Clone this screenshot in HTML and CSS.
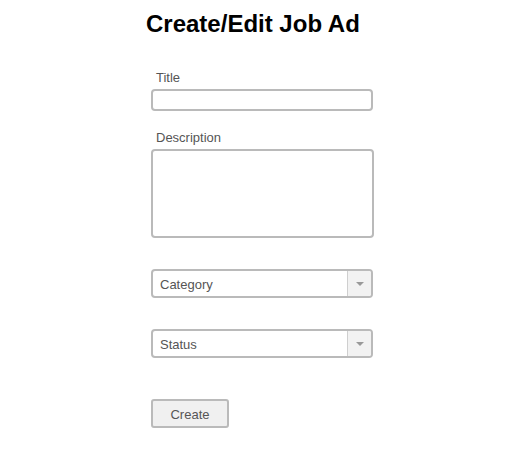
FILE: index.html
```html
<!DOCTYPE html>
<html>
<head>
<meta charset="utf-8">
<link rel="stylesheet" href="styles.css">
</head>
<body>
<h1 class="heading">Create/Edit Job Ad</h1>
<form class="job-form">
  <label class="field-label">Title</label>
  <div class="text-input"></div>
  <label class="field-label label-desc">Description</label>
  <div class="text-area"></div>
  <div class="select select-first">
    <span class="select-value">Category</span>
    <span class="select-arrow"><span class="caret"></span></span>
  </div>
  <div class="select select-second">
    <span class="select-value">Status</span>
    <span class="select-arrow"><span class="caret"></span></span>
  </div>
  <div class="btn-row"><button type="button" class="btn">Create</button></div>
</form>
</body>
</html>
```
FILE: styles.css
```css
html, body {
  margin: 0;
  padding: 0;
  background: #fff;
}
body {
  font-family: "Liberation Sans", Arial, sans-serif;
  width: 526px;
  height: 464px;
  overflow: hidden;
}
.heading {
  margin: 10px 0 0 146px;
  font-size: 24px;
  line-height: 28px;
  font-weight: bold;
  color: #000;
}
.job-form {
  margin: 31px 0 0 151px;
  width: 223px;
  display: flex;
  flex-direction: column;
  align-items: flex-start;
}
.field-label {
  display: block;
  box-sizing: border-box;
  padding: 2px 0 0 5px;
  font-size: 13px;
  line-height: 13px;
  height: 15px;
  color: #555;
  margin-bottom: 5px;
}
.label-desc {
  margin-top: 18px;
}
.text-input {
  box-sizing: border-box;
  width: 222px;
  height: 22px;
  border: 2px solid #bababa;
  border-radius: 4px;
  background: #fff;
}
.text-area {
  box-sizing: border-box;
  width: 223px;
  height: 89px;
  border: 2px solid #bababa;
  border-radius: 4px;
  background: #fff;
}
.select {
  box-sizing: border-box;
  width: 222px;
  height: 29px;
  border: 2px solid #bababa;
  border-radius: 4px;
  display: flex;
  align-items: stretch;
  overflow: hidden;
  background: #fff;
}
.select-first { margin-top: 31px; }
.select-second { margin-top: 31px; }
.select-value {
  flex: 1;
  padding: 2px 0 0 7px;
  font-size: 13px;
  line-height: 23px;
  color: #555;
}
.select-arrow {
  width: 23px;
  border-left: 1px solid #cfcfcf;
  background: #f2f2f2;
  display: flex;
  align-items: center;
  justify-content: center;
}
.caret {
  width: 0;
  height: 0;
  margin-top: 1px;
  border-left: 4px solid transparent;
  border-right: 4px solid transparent;
  border-top: 4px solid #999;
}
.btn-row {
  margin-top: 41px;
}
.btn {
  box-sizing: border-box;
  width: 78px;
  height: 29px;
  border: 2px solid #bababa;
  border-radius: 3px;
  background: #f0f0f0;
  font-family: "Liberation Sans", Arial, sans-serif;
  font-size: 13px;
  line-height: 15px;
  color: #555;
  padding: 2px 0 0;
  display: block;
}
```
